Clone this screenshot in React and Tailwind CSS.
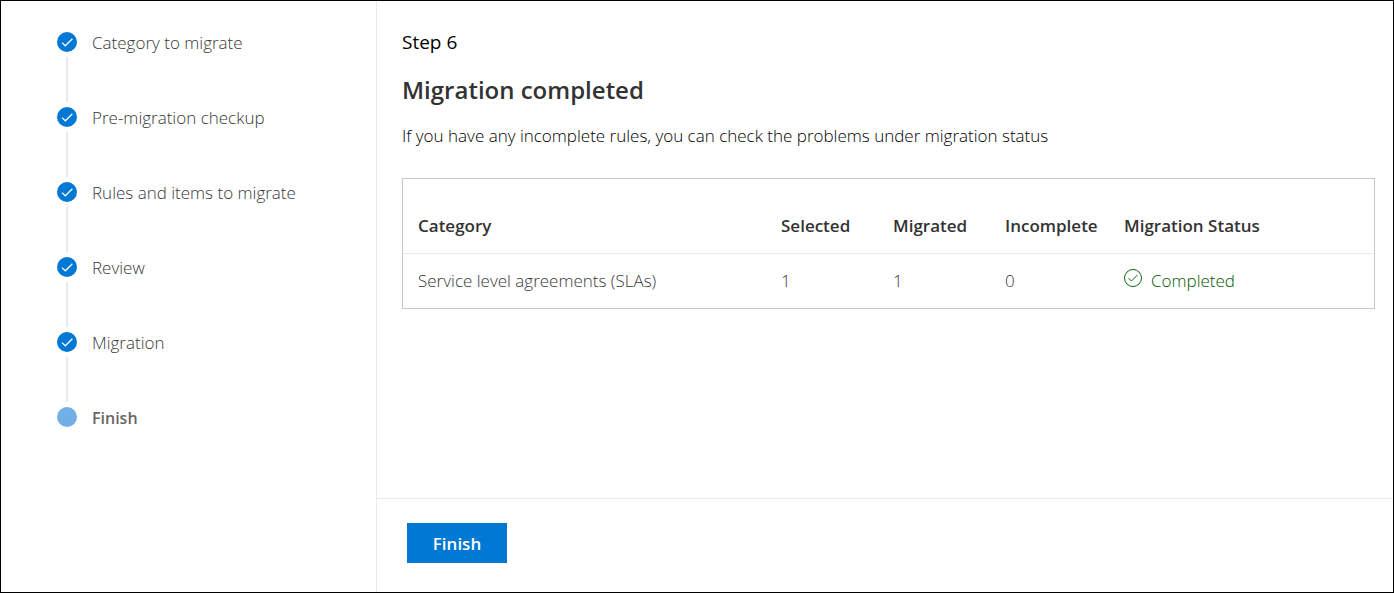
const steps = [
  'Category to migrate',
  'Pre-migration checkup',
  'Rules and items to migrate',
  'Review',
  'Migration',
  'Finish',
];

const columns = ['Category', 'Selected', 'Migrated', 'Incomplete', 'Migration Status'];

const rows = [
  { category: 'Service level agreements (SLAs)', selected: 1, migrated: 1, incomplete: 0, status: 'Completed' },
];

function StepMarker({ current }) {
  return (
    <svg className="size-5 shrink-0" viewBox="0 0 20 20" fill="none" aria-hidden="true">
      <circle cx="10" cy="10" r="10" fill={current ? '#71afe5' : '#0078d4'} />
      {!current && <path d="M5 10.6 8.3 13.8 15.4 6.8" stroke="#fff" strokeWidth="1.2" />}
    </svg>
  );
}

function CompletedIcon() {
  return (
    <svg className="-mt-1.5 size-[18px] shrink-0" viewBox="0 0 18 18" fill="none" stroke="#0b6a0b" aria-hidden="true">
      <circle cx="9" cy="9" r="8.5" strokeWidth="1" />
      <path d="M4.6 9.2 7.4 12 13.4 6" strokeWidth="1" />
    </svg>
  );
}

function StepNav() {
  return (
    <nav aria-label="Migration steps" className="w-[376px] shrink-0 border-r border-[#eaeaea] pl-14 pt-[31px]">
      <ol>
        {steps.map((label, i) => {
          const last = i === steps.length - 1;
          return (
            <li key={label} className="flex gap-[15px]" aria-current={last ? 'step' : undefined}>
              <div className="flex flex-col items-center">
                <StepMarker current={last} />
                {!last && <span className="my-[5px] h-[45px] w-0.5 bg-[#eaeaea]" />}
              </div>
              <span className={last ? 'text-base leading-[22px] font-semibold text-[#666666]' : 'text-[17px] leading-[22px] font-light text-[#383838]'}>
                {label}
              </span>
            </li>
          );
        })}
      </ol>
    </nav>
  );
}

function ResultsTable() {
  return (
    <div className="mt-[30px] border border-[#c8c8c8] pt-5">
      <table className="w-full table-fixed text-left text-[17px] leading-6">
        <colgroup>
          <col className="w-[378px]" />
          <col className="w-28" />
          <col className="w-28" />
          <col className="w-[119px]" />
          <col />
        </colgroup>
        <thead>
          <tr className="h-[54px] border-b border-[#eaeaea] text-[#333333]">
            {columns.map((name) => (
              <th key={name} scope="col" className="font-semibold first:pl-[15px]">{name}</th>
            ))}
          </tr>
        </thead>
        <tbody>
          {rows.map((row) => (
            <tr key={row.category} className="h-[55px] font-light text-[#383838]">
              <td className="pl-[15px]">{row.category}</td>
              <td>{row.selected}</td>
              <td>{row.migrated}</td>
              <td>{row.incomplete}</td>
              <td>
                <span className="flex items-center gap-[9px] text-[#005a00]">
                  <CompletedIcon />
                  {row.status}
                </span>
              </td>
            </tr>
          ))}
        </tbody>
      </table>
    </div>
  );
}

export default function App() {
  return (
    <div className="flex min-h-screen border border-black bg-white font-['Segoe_UI','Open_Sans','Noto_Sans',sans-serif]">
      <StepNav />
      <div className="flex min-w-0 flex-1 flex-col">
        <main className="flex-1 pt-[27px] pr-[18px] pl-[25px]">
          <p className="text-[19px] leading-7 text-black">Step 6</p>
          <h1 className="mt-[18px] text-2xl leading-8 font-semibold text-[#333333]">Migration completed</h1>
          <p className="mt-[18px] text-[17px] leading-6 font-light text-black">
            If you have any incomplete rules, you can check the problems under migration status
          </p>
          <ResultsTable />
        </main>
        <footer className="border-t border-[#eaeaea] px-[30px] pt-6 pb-[29px]">
          <button type="button" className="block h-10 w-[100px] bg-[#0078d4] pt-0.5 text-[17px] leading-6 font-semibold text-white">
            Finish
          </button>
        </footer>
      </div>
    </div>
  );
}
